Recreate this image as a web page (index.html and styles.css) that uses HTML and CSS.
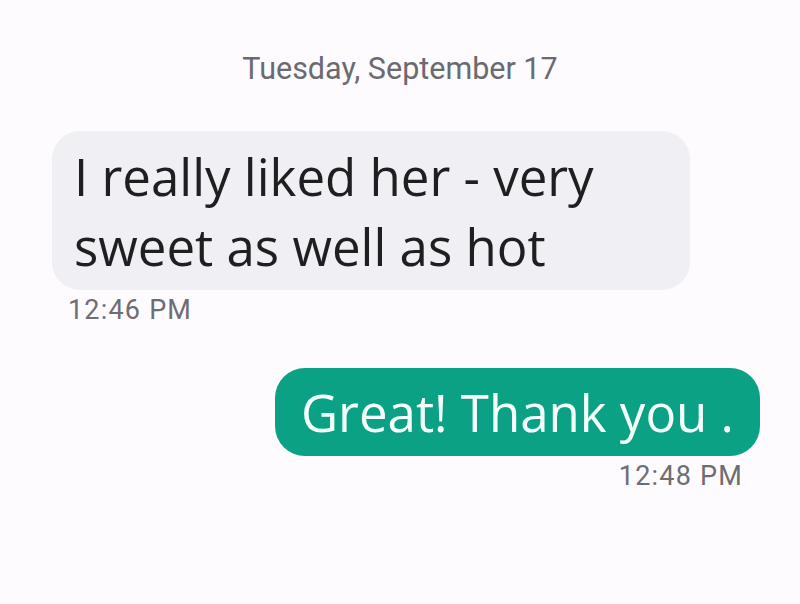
FILE: index.html
```html
<!DOCTYPE html>
<html lang="en">
<head>
  <meta charset="UTF-8">
  <meta name="viewport" content="width=device-width, initial-scale=1.0">
  <title>Messages</title>
  <link rel="stylesheet" href="styles.css">
</head>
<body>
  <div class="thread">
    <div class="date">Tuesday, September 17</div>

    <div class="msg incoming">
      <div class="bubble">I really liked her - very sweet as well as hot</div>
      <div class="time">12:46 PM</div>
    </div>

    <div class="msg outgoing">
      <div class="bubble">Great! Thank you .</div>
      <div class="time">12:48 PM</div>
    </div>
  </div>
</body>
</html>
```

FILE: styles.css
```css
body {
  margin: 0;
  background-color: #fdfbfe;
  font-family: "Open Sans", Arial, sans-serif;
  color: #1f1f22;
}
.thread {
  width: 800px;
  height: 604px;
  display: flex;
  flex-direction: column;
  padding: 49px 40px 0 52px;
  box-sizing: border-box;
}
.date {
  text-align: center;
  font-family: Roboto, sans-serif;
  font-size: 30.5px;
  color: #6b6a70;
  margin-left: -52px;
  margin-right: -40px;
  line-height: 40px;
}
.msg {
  display: flex;
  flex-direction: column;
}
.incoming {
  align-items: flex-start;
  margin-top: 42px;
}
.outgoing {
  align-items: flex-end;
  margin-top: 38px;
}
.bubble {
  font-size: 51px;
  line-height: 70px;
}
.incoming .bubble {
  width: 638px;
  box-sizing: border-box;
  padding: 10px 22px 9px 22px;
  background: #f0eff3;
  border-radius: 28px;
}
.outgoing .bubble {
  background: #0aa184;
  color: #f4fffb;
  padding: 9px 26px;
  border-radius: 30px;
}
.time {
  font-family: Roboto, sans-serif;
  font-size: 27px;
  letter-spacing: 1.2px;
  color: #6e6d73;
  line-height: 40px;
}
.incoming .time {
  margin-left: 16px;
}
.outgoing .time {
  margin-right: 17px;
}
```
